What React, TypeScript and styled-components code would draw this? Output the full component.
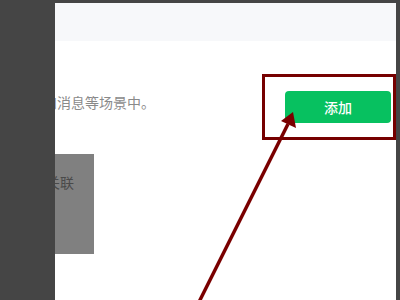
import React from 'react';
import styled, { createGlobalStyle } from 'styled-components';

const GlobalStyle = createGlobalStyle`
  html, body {
    margin: 0;
    padding: 0;
    background: #454545;
  }
  * {
    box-sizing: border-box;
  }
`;

const Frame = styled.div`
  position: relative;
  width: 400px;
  height: 300px;
  overflow: hidden;
  background: #454545;
  padding-top: 3px;
  display: grid;
  grid-template-columns: 55px 1fr 4px;
  font-family: "Noto Sans CJK SC", "Noto Sans", sans-serif;
`;

const Shade = styled.div`
  background: #454545;
`;

const Main = styled.main`
  display: flex;
  flex-direction: column;
  background: #ffffff;
  overflow: hidden;
`;

const Header = styled.div`
  height: 38px;
  flex-shrink: 0;
  background: #f7f8fa;
`;

const Body = styled.div`
  margin-left: -23px;
  display: flex;
  flex-direction: column;
`;

const ActionRow = styled.div`
  margin-top: 50px;
  padding-right: 5px;
  display: flex;
  align-items: flex-start;
  justify-content: space-between;
`;

const Description = styled.p`
  margin: 0;
  padding-left: 11px;
  font-size: 14px;
  line-height: 22px;
  color: #8a8a8a;
  white-space: nowrap;
`;

const AddButton = styled.button`
  width: 106px;
  height: 32px;
  flex-shrink: 0;
  border: none;
  border-radius: 4px;
  background: #07c160;
  color: #ffffff;
  font-family: inherit;
  font-size: 14px;
  font-weight: 500;
  cursor: pointer;
`;

const LinkCard = styled.div`
  margin-top: 31px;
  width: 62px;
  height: 100px;
  padding: 18px 0 0 14px;
  background: #808080;
  color: #4a4a4a;
  font-size: 14px;
  line-height: 20px;
  white-space: nowrap;
`;

const Highlight = styled.div`
  position: absolute;
  left: 262px;
  top: 74px;
  width: 134px;
  height: 66px;
  border: 3px solid #760000;
  pointer-events: none;
`;

const Annotation = styled.svg`
  position: absolute;
  left: 0;
  top: 0;
  pointer-events: none;
`;

export default function App() {
  return (
    <>
      <GlobalStyle />
      <Frame>
        <Shade />
        <Main>
          <Header />
          <Body>
            <ActionRow>
              <Description>和消息等场景中。</Description>
              <AddButton>添加</AddButton>
            </ActionRow>
            <LinkCard>关联</LinkCard>
          </Body>
        </Main>
        <Shade />
        <Highlight />
        <Annotation width="400" height="300" viewBox="0 0 400 300">
          <line x1="199" y1="302" x2="288" y2="124" stroke="#7a0000" strokeWidth="3.5" />
          <polygon points="293,112 296,128 281,121" fill="#7a0000" />
        </Annotation>
      </Frame>
    </>
  );
}
